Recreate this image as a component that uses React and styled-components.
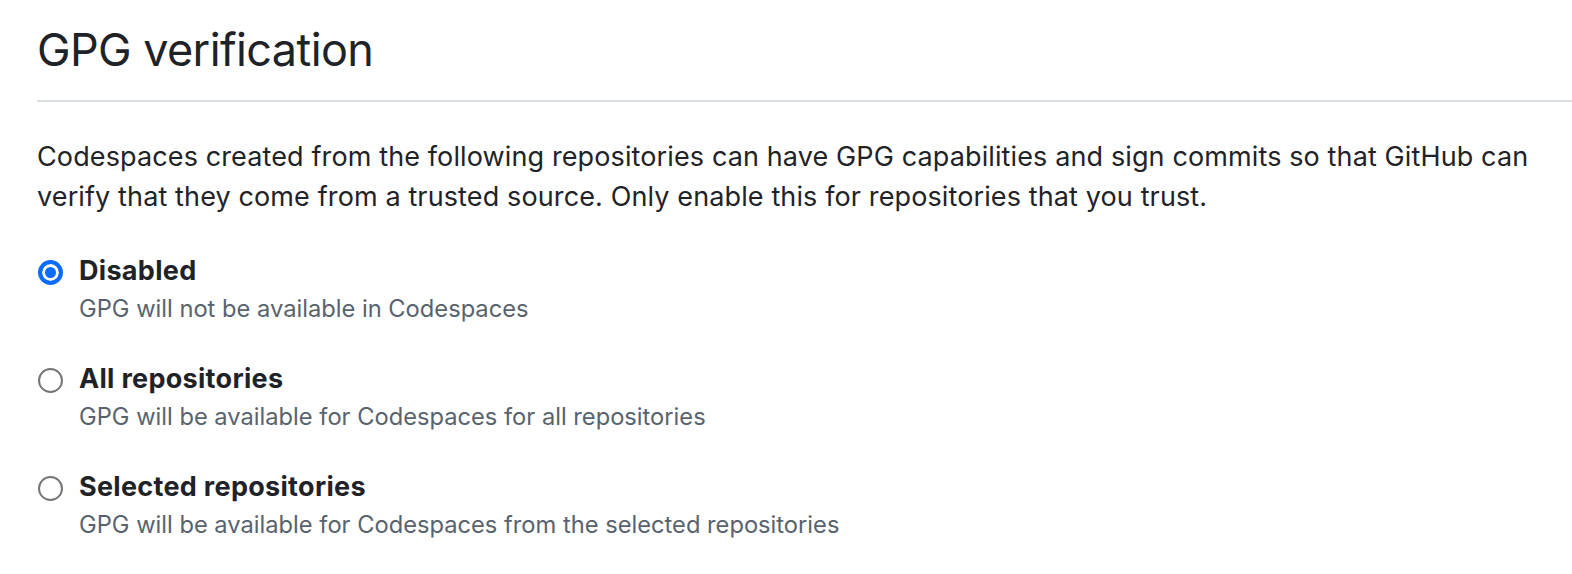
import styled, {createGlobalStyle} from "styled-components";
import {useState} from "react";

const GlobalStyle = createGlobalStyle`
  body {
    margin: 0;
    background: #ffffff;
    font-family: Inter, "Liberation Sans", Arial, sans-serif;
    color: #1f2328;
  }
`;

const Page = styled.div`
  display: flex;
  flex-direction: column;
  padding: 22px 0 0 37px;
  box-sizing: border-box;
  width: 100%;
`;

const Heading = styled.h2`
  margin: 0;
  padding-bottom: 22px;
  border-bottom: 2px solid #d8dee4;

  font-size: 45px;
  font-weight: 400;
  letter-spacing: -0.6px;
  line-height: 56px;
  color: #1f2328;
`;

const Intro = styled.p`
  margin: 35px 0 0 0;

  font-size: 27px;
  letter-spacing: 0.12px;
  line-height: 40px;
  color: #1f2328;
`;

const Options = styled.div`
  display: flex;
  flex-direction: column;
  gap: 36px;
  margin-top: 37px;
`;

const Option = styled.label`
  display: grid;
  grid-template-columns: 26px 1fr;
  column-gap: 16px;
  row-gap: 4px;
  cursor: pointer;
`;

const Radio = styled.span`
  grid-row: 1;
  align-self: center;
  box-sizing: border-box;
  width: 25px;
  height: 25px;
  margin-left: 1px;
  margin-top: 3px;
  border-radius: 50%;
  border: ${p => p.$checked ? "4px solid #0a6cff" : "2px solid #767676"};
  background: ${p => p.$checked ? "#0a6cff" : "#ffffff"};
  box-shadow: ${p => p.$checked ? "inset 0 0 0 3px #ffffff" : "none"};
`;

const Label = styled.span`
  font-size: 27px;
  font-weight: 700;
  letter-spacing: 0.3px;
  line-height: 34px;
  color: #1f2328;
`;

const Note = styled.span`
  grid-column: 2;
  font-size: 23.7px;
  line-height: 34px;
  color: #59636e;
`;

const options = [
    {id: "disabled", label: "Disabled", note: "GPG will not be available in Codespaces"},
    {id: "all", label: "All repositories", note: "GPG will be available for Codespaces for all repositories"},
    {id: "selected", label: "Selected repositories", note: "GPG will be available for Codespaces from the selected repositories"},
];

function App() {
    const [value, setValue] = useState("disabled");

    return (
        <>
            <GlobalStyle/>
            <Page>
                <Heading>GPG verification</Heading>
                <Intro>
                    Codespaces created from the following repositories can have GPG capabilities and sign commits so that GitHub can
                    <br/>
                    verify that they come from a trusted source. Only enable this for repositories that you trust.
                </Intro>
                <Options>
                    {options.map(o => (
                        <Option key={o.id} onClick={() => setValue(o.id)}>
                            <Radio $checked={value === o.id}/>
                            <Label>{o.label}</Label>
                            <Note>{o.note}</Note>
                        </Option>
                    ))}
                </Options>
            </Page>
        </>
    );
}

export default App;
